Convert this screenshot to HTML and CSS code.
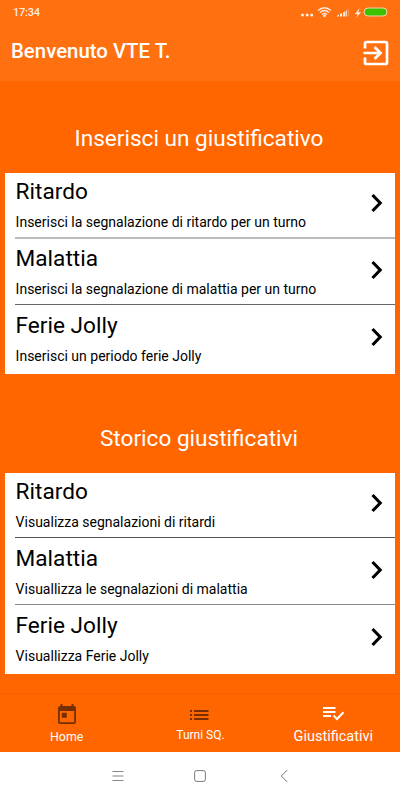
FILE: index.html
```html
<!DOCTYPE html>
<html lang="it">
<head>
<meta charset="utf-8">
<title>Giustificativi</title>
<link rel="stylesheet" href="styles.css">
</head>
<body>
<svg class="defs" width="0" height="0"><symbol id="chevron" viewBox="0 0 14 20"><path d="M2.500 2L10.200 10L2.500 18" fill="none" stroke="#000" stroke-width="3.1"/></symbol></svg>
<div class="screen">
  <header class="header">
    <div class="status">
      <span class="time">17:34</span>
      <svg class="indicators" width="90" height="14" viewBox="0 0 90 14">
        <g fill="#fff" fill-opacity=".88"><circle cx="3.500" cy="9" r="1.500"/><circle cx="8.200" cy="9" r="1.500"/><circle cx="12.700" cy="9" r="1.500"/><circle cx="25.500" cy="9.800" r="1.400"/></g>
        <g fill="none" stroke="#fff" stroke-opacity=".85" stroke-width="1.300"><path d="M19 4.500Q25.500 -1 32 4.500"/><path d="M21 6.500Q25.500 2.500 30 6.500"/><path d="M23 8.500Q25.500 6.300 28 8.500"/></g>
        <path d="M38 10.500V9.500L40 8.500V10.500ZM41 10.500V8L43 7V10.500ZM44 10.500V6.500L46 5.500V10.500Z" fill="#fff" fill-opacity=".85"/>
        <path d="M46.500 10.500V5L48 4V10.500Z" fill="#fff" fill-opacity=".7"/><path d="M49.300 10.500V3" stroke="#fff" stroke-opacity=".3"/>
        <path d="M60.500 2L56 8H58.800L57 12L62 6.300H59.200Z" fill="#fff" fill-opacity=".9"/>
        <rect x="65" y="2" width="23" height="8" rx="4" fill="#3bc200" stroke="#ffd0ae"/>
      </svg>
    </div>
    <div class="toolbar">
      <h1>Benvenuto VTE T.</h1>
      <svg width="26" height="26" viewBox="0 0 26 26" fill="none" stroke="#fff" stroke-width="2.700"><path d="M2 8.500V3.500Q2 2 3.500 2H22.500Q24 2 24 3.500V22.500Q24 24 22.500 24H3.500Q2 24 2 22.500V17.500"/><path d="M0.500 13H17M11.500 7L17.500 13L11.500 19"/></svg>
    </div>
  </header>
  <main>
    <h2>Inserisci un giustificativo</h2>
    <ul class="card first">
      <li><div class="row"><div><h3>Ritardo</h3><p>Inserisci la segnalazione di ritardo per un turno</p></div><svg class="chevron"><use href="#chevron"/></svg></div></li>
      <li><div class="row"><div><h3>Malattia</h3><p>Inserisci la segnalazione di malattia per un turno</p></div><svg class="chevron"><use href="#chevron"/></svg></div></li>
      <li><div class="row"><div><h3>Ferie Jolly</h3><p>Inserisci un periodo ferie Jolly</p></div><svg class="chevron"><use href="#chevron"/></svg></div></li>
    </ul>
    <h2>Storico giustificativi</h2>
    <ul class="card second">
      <li><div class="row"><div><h3>Ritardo</h3><p>Visualizza segnalazioni di ritardi</p></div><svg class="chevron"><use href="#chevron"/></svg></div></li>
      <li><div class="row"><div><h3>Malattia</h3><p>Visuallizza le segnalazioni di malattia</p></div><svg class="chevron"><use href="#chevron"/></svg></div></li>
      <li><div class="row"><div><h3>Ferie Jolly</h3><p>Visuallizza Ferie Jolly</p></div><svg class="chevron"><use href="#chevron"/></svg></div></li>
    </ul>
  </main>
  <nav class="tabs">
    <a class="tab home"><svg width="20" height="22" viewBox="0 0 20 22"><path fill="#752f00" fill-rule="evenodd" d="M3.500 0H5.500V2H14.500V0H16.500V2H17Q19 2 19 4V18Q19 20 17 20H3Q1 20 1 18V4Q1 2 3 2H3.500ZM2.800 7V18.300H17.200V7Z"/><rect x="4.800" y="8.800" width="5" height="5" fill="#752f00"/></svg><span>Home</span></a>
    <a class="tab shifts"><svg width="20" height="12" viewBox="0 0 20 12"><path d="M0 2H2M4 2H18.500M0 6H2M4 6H18.500M0 10H2M4 10H18.500" stroke="#752f00" stroke-width="2"/></svg><span>Turni SQ.</span></a>
    <a class="tab active"><svg width="22" height="16" viewBox="0 0 22 16" fill="none" stroke="#fff" stroke-width="2"><path d="M1 2H13.500M1 6H13.500M1 10H9M11.500 9.500L15 13L21.500 6.300"/></svg><span>Giustificativi</span></a>
  </nav>
  <footer class="system">
    <svg width="12" height="12" viewBox="0 0 12 12"><path d="M.5 1.500H11.500M.5 6H11.500M.5 10.500H11.500" stroke="#858585"/></svg>
    <svg width="12" height="12" viewBox="0 0 12 12"><rect x=".6" y=".6" width="10.800" height="10.800" rx="2" fill="none" stroke="#777"/></svg>
    <svg width="12" height="12" viewBox="0 0 12 12"><path d="M11.300 0L5.300 6L11.300 12" fill="none" stroke="#777"/></svg>
  </footer>
</div>
</body>
</html>
```

FILE: styles.css
```css
* { box-sizing: border-box; margin: 0; padding: 0; }
body { font-family: Roboto, sans-serif; background: #fff; }
.defs { display: none; }
.screen { width: 400px; height: 800px; display: flex; flex-direction: column; background: #ff6600; overflow: hidden; }
.header { height: 81px; background: #ff7011; color: #fff; }
.status { height: 26px; padding: 0 11px 0 13px; display: flex; justify-content: space-between; align-items: center; }
.time { font-size: 11px; font-weight: 500; line-height: 14px; letter-spacing: -.2px; opacity: .88; }
.indicators { display: block; }
.toolbar { height: 54px; padding: 0 11px; display: flex; justify-content: space-between; align-items: center; }
h1 { font-size: 20.4px; font-weight: 500; line-height: 24px; margin-top: -5px; }
main { height: 612px; padding: 0 5px; }
h2 { height: 92px; padding: 43px 2px 0 0; line-height: 30px; font-size: 22.6px; font-weight: 400; text-align: center; color: #fff; }
.card + h2 { height: 99px; padding-top: 50px; }
.card { height: 201px; background: #fff; list-style: none; padding-left: 10px; }
.card li { padding-top: 5px; }
.first li:nth-child(1) { height: 66px; border-bottom: 2px solid #bbb; }
.first li:nth-child(2) { height: 66px; padding-top: 6px; border-bottom: 1px solid #666; }
.first li:nth-child(3) { height: 69px; padding-top: 7px; }
.second li:nth-child(1) { height: 65px; border-bottom: 1px solid #555; }
.second li:nth-child(2) { height: 67px; padding-top: 7px; border-bottom: 1px solid #888; }
.second li:nth-child(3) { height: 69px; padding-top: 7px; }
.row { display: flex; justify-content: space-between; padding: 0 11px 0 .6px; }
h3 { font-size: 22.6px; font-weight: 400; line-height: 28px; }
p { font-size: 14px; line-height: 20px; margin-top: 6px; }
.chevron { width: 14px; height: 20px; margin-top: 15px; }
.tabs { height: 59px; display: grid; grid-template-columns: repeat(3, 1fr); border-top: 1px solid #f16100; color: #fff; }
.tab { display: flex; flex-direction: column; align-items: center; font-size: 12.4px; line-height: 16px; }
.home { padding-top: 10px; gap: 3px; }
.shifts { padding: 15px 0 0 1px; gap: 6px; font-size: 12px; }
.active { padding-top: 12px; gap: 7px; font-size: 14.5px; }
.system { height: 48px; background: #fff; display: flex; justify-content: center; align-items: center; gap: 70px; }
```
